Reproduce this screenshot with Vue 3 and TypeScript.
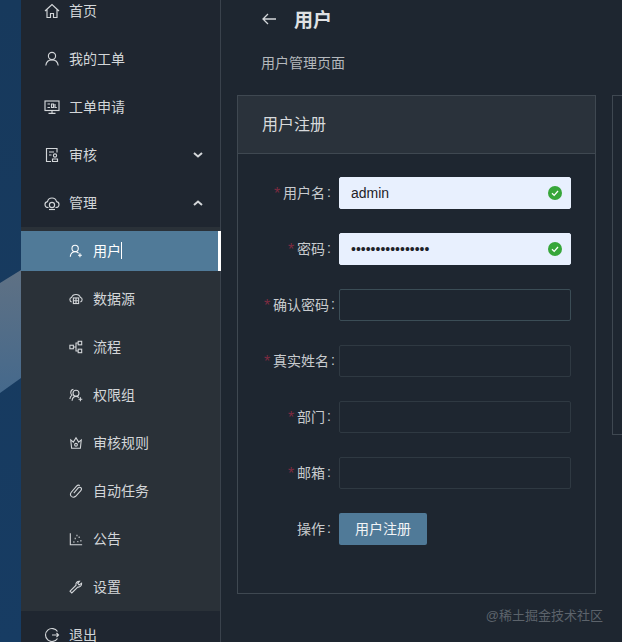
<template>
  <div class="page">
    <div class="backdrop">
      <svg width="21" height="642" viewBox="0 0 21 642">
        <defs>
          <linearGradient id="shard" x1="0" y1="0" x2="0" y2="1">
            <stop offset="0" stop-color="#5f7184" />
            <stop offset="1" stop-color="#45698c" />
          </linearGradient>
        </defs>
        <polygon points="0,283 21,270 21,378 0,393" fill="url(#shard)" />
      </svg>
    </div>

    <aside class="sidebar">
      <ul class="menu">
        <li v-for="item in topItems" :key="item.label" class="menu-item">
          <svg class="icon" viewBox="0 0 16 16" v-html="item.icon"></svg>
          <span class="menu-label">{{ item.label }}</span>
          <svg v-if="item.arrow" class="arrow" viewBox="0 0 10 6">
            <path :d="item.arrow === 'up' ? 'M1 5 5 1.5 9 5' : 'M1 1 5 4.5 9 1'" />
          </svg>
        </li>
      </ul>
      <ul class="submenu">
        <li
          v-for="item in subItems"
          :key="item.label"
          class="menu-item sub-item"
          :class="{ active: item.active }"
        >
          <svg class="icon" viewBox="0 0 16 16" v-html="item.icon"></svg>
          <span class="menu-label">{{ item.label }}</span>
          <span v-if="item.active" class="caret"></span>
        </li>
      </ul>
      <div class="menu-item logout">
        <svg class="icon" viewBox="0 0 16 16">
          <path d="M13.5 4.5A6.5 6.5 0 1 0 13.5 11.5M8 8h7M12.5 6l2 2-2 2" />
        </svg>
        <span class="menu-label">退出</span>
      </div>
    </aside>

    <main class="content">
      <header class="page-header">
        <svg class="back" viewBox="0 0 14 12"><path d="M14 6H1M6 1 1 6l5 5" /></svg>
        <h1 class="page-title">用户</h1>
      </header>
      <p class="page-desc">用户管理页面</p>

      <div class="cards">
        <section class="card">
          <h2 class="card-head">用户注册</h2>
          <form class="form" @submit.prevent>
            <div v-for="field in fields" :key="field.label" class="form-row">
              <label class="form-label" :class="{ long: field.label.length > 3 }"><i class="req">*</i>{{ field.label }}<span class="colon">:</span></label>
              <div class="control" :class="{ filled: field.value, strong: field.strong }">
                <input class="input" :type="field.type" :value="field.value" readonly />
                <svg v-if="field.value" class="ok" viewBox="0 0 14 14">
                  <circle cx="7" cy="7" r="7" />
                  <path d="M4 7.2 6.2 9.4 10 5" />
                </svg>
              </div>
            </div>
            <div class="form-row">
              <label class="form-label">操作<span class="colon">:</span></label>
              <button class="submit" type="button">用户注册</button>
            </div>
          </form>
        </section>
        <section class="card side-card"></section>
      </div>
      <div class="watermark">@稀土掘金技术社区</div>
    </main>
  </div>
</template>

<script setup lang="ts">
interface MenuItem {
  label: string
  icon: string
  arrow?: 'up' | 'down'
  active?: boolean
}

interface Field {
  label: string
  type: string
  value: string
  strong?: boolean
}

const topItems: MenuItem[] = [
  { label: '首页', icon: '<path d="M1 8 8 1.5 15 8M3 6.5V14.5H6.5V10.5H9.5V14.5H13V6.5"/>' },
  { label: '我的工单', icon: '<circle cx="8" cy="5" r="3.6"/><path d="M1.8 14.5C2.2 11 4.6 8.8 8 8.8S13.8 11 14.2 14.5"/>' },
  {
    label: '工单申请',
    icon: '<rect x="1" y="2" width="14" height="9.5"/><path d="M8 11.5V14M4.5 14.3H11.5M3.5 5H6M3.5 8.5H6M7.5 5H9.5V8.5H7.5ZM11 5V8.5H12.8"/>',
  },
  {
    label: '审核',
    icon: '<path d="M13 5.5V1.5H2.5V14.5H7M5 5H10M5 8H7.5"/><circle cx="11" cy="8.5" r="1.6"/><path d="M8.5 14.5V12H13.5V14.5Z"/>',
    arrow: 'down',
  },
  {
    label: '管理',
    icon: '<path d="M4.5 12.5C2.4 12.5 1 11 1 9.4 1 7.8 2.2 6.8 3.5 6.6 4 4.4 5.8 3 8 3S12 4.4 12.5 6.6C13.8 6.8 15 7.8 15 9.4 15 11 13.6 12.5 11.5 12.5"/><circle cx="8" cy="10" r="2.6"/><path d="M5 14.5H11"/>',
    arrow: 'up',
  },
]

const subItems: MenuItem[] = [
  { label: '用户', icon: '<circle cx="7" cy="5" r="3.6"/><path d="M1.5 14.5C1.8 11 4 8.8 7 8.8S10 9.5 11 10.5M12.5 10.5V15M10.3 12.8H14.7"/>', active: true },
  {
    label: '数据源',
    icon: '<path d="M3 11.5C1.6 11 1 10 1 8.6 1 7.4 1.9 6.4 3 6.2 3.6 4 5.6 2.8 8 2.8S12.4 4 13 6.2C14.1 6.4 15 7.4 15 8.6 15 10 14.4 11 13 11.5"/><rect x="5" y="6.8" width="6" height="6.4"/><path d="M5 10H11M8 6.8V13.2"/>',
  },
  {
    label: '流程',
    icon: '<rect x="1" y="6" width="4" height="4"/><rect x="10.5" y="1.5" width="4" height="4"/><rect x="10.5" y="10.5" width="4" height="4"/><path d="M5 8H8V3.5H10.5M8 8V12.5H10.5"/>',
  },
  {
    label: '权限组',
    icon: '<circle cx="8" cy="6" r="3.4"/><path d="M5 1.5C3 2 2 3.5 2 5.4 2 6.6 2.6 7.6 3.4 8.2 2 9.2 1.2 10.6 1 12.5M3.5 14.5C3.8 11.6 5.6 9.6 8 9.6 9.4 9.6 10.4 10 11.3 11M13 10.5V15M10.8 12.8H15.2"/>',
  },
  {
    label: '审核规则',
    icon: '<path d="M2 4.5 5 7 8 2 11 7 14 4.5 13 14H3Z"/><circle cx="8" cy="10" r="1.6"/>',
  },
  {
    label: '自动任务',
    icon: '<path d="M5.5 10.5 10.5 4.5C11.6 3.2 13.2 3.6 13.8 4.4 14.5 5.4 14.4 6.6 13.5 7.6L7.6 14C6 15.6 3.6 15.3 2.5 14 1.3 12.5 1.5 10.8 2.6 9.4L8.6 2.5C9.6 1.4 11 1 12.4 1.6"/>',
  },
  {
    label: '公告',
    icon: '<path d="M1.5 1.5V14.5H15"/><path d="M5 11.5h1.2M9.5 11h1.2M13 10h1.2M6.5 7.5h1.2M11 6h1.2M8.5 4h1.2" stroke-width="1.6"/>',
  },
  {
    label: '设置',
    icon: '<path d="M1.2 12.8 8 6C7.4 3.6 9.2 1.2 12 1.4L10 3.8 11.6 5.6 14.4 3.6C14.8 6.4 12.4 8.6 10 8L3.2 14.8Z"/>',
  },
]

const fields: Field[] = [
  { label: '用户名', type: 'text', value: 'admin' },
  { label: '密码', type: 'password', value: 'admin12345678901' },
  { label: '确认密码', type: 'password', value: '', strong: true },
  { label: '真实姓名', type: 'text', value: '' },
  { label: '部门', type: 'text', value: '' },
  { label: '邮箱', type: 'text', value: '' },
]
</script>

<style>
html,
body {
  margin: 0;
  background: #1e2630;
  overflow: hidden;
}
</style>

<style scoped>
* {
  box-sizing: border-box;
}

.page {
  display: flex;
  width: 622px;
  height: 642px;
  overflow: hidden;
  background: #1e2630;
  color: #d3d6d9;
  font-family: "Liberation Sans", "Noto Sans CJK SC", sans-serif;
  font-size: 14px;
}

.backdrop {
  flex: 0 0 21px;
  height: 642px;
  background: linear-gradient(180deg, #17395c 0%, #173c63 100%);
}

.backdrop svg {
  display: block;
}

.sidebar {
  flex: 0 0 200px;
  height: 642px;
  background: linear-gradient(#3a424c, #3a424c) right / 1px 100% no-repeat, #1f2630;
  overflow: hidden;
}

.menu,
.submenu {
  display: flex;
  flex-direction: column;
  gap: 8px;
  list-style: none;
  margin: 0;
  padding: 0;
}

.menu {
  margin-top: -9px;
  padding-bottom: 4px;
}

.submenu {
  margin-right: 1px;
  background: #2a3138;
  padding: 4px 0;
}

.menu-item {
  position: relative;
  display: flex;
  align-items: center;
  height: 40px;
  padding-left: 24px;
  color: #d3d6d9;
}

.sub-item {
  padding-left: 48px;
}

.sub-item.active {
  margin-right: -1px;
  background: #507a98;
  color: #ffffff;
  border-right: 3px solid #ffffff;
}

.logout {
  margin-top: 4px;
}

.icon {
  flex: none;
  width: 16px;
  height: 16px;
  margin: 0 9px 0 -1px;
  fill: none;
  stroke: currentColor;
  stroke-width: 1.15;
}

.sub-item .icon {
  width: 14px;
  height: 14px;
  margin: 0 10px 0 0;
  stroke-width: 1.25;
}

.menu-label {
  margin-top: -2px;
  white-space: nowrap;
}

.caret {
  width: 1px;
  height: 17px;
  margin-top: -1px;
  background: #ffffff;
}

.arrow {
  position: absolute;
  right: 18px;
  top: 17px;
  width: 10px;
  height: 6px;
  fill: none;
  stroke: #d3d6d9;
  stroke-width: 2;
}

.content {
  flex: 1;
  min-width: 0;
  padding-left: 16px;
}

.page-header {
  display: flex;
  align-items: center;
  height: 38px;
  padding-left: 25px;
}

.back {
  width: 14px;
  height: 12px;
  margin-right: 18px;
  fill: none;
  stroke: #d3d6d9;
  stroke-width: 1.3;
}

.page-title {
  margin: -2px 0 0;
  font-size: 19px;
  font-weight: 700;
  color: #dfe1e3;
}

.page-desc {
  margin: 14px 0 0 24px;
  line-height: 22px;
  color: #b4b8bc;
}

.cards {
  display: flex;
  align-items: flex-start;
  gap: 16px;
  margin-top: 21px;
  width: 500px;
}

.card {
  flex: 0 0 359px;
  height: 499px;
  border: 1px solid #3f4851;
}

.side-card {
  flex: 0 0 120px;
  height: 340px;
}

.card-head {
  margin: 0;
  height: 58px;
  padding-left: 24px;
  background: #2a323b;
  border-bottom: 1px solid #3f4851;
  font-size: 16px;
  font-weight: 400;
  line-height: 57px;
  color: #d8dadc;
}

.form {
  padding-top: 23px;
}

.form-row {
  display: flex;
  align-items: center;
  height: 32px;
  margin-bottom: 24px;
}

.form-label {
  flex: 0 0 101px;
  display: flex;
  justify-content: flex-end;
  align-items: center;
  padding-right: 8px;
  padding-bottom: 2px;
  white-space: nowrap;
  color: #c8cbce;
}

.form-label.long {
  padding-right: 4px;
}

.req {
  font-style: normal;
  font-size: 16px;
  margin-top: 3px;
  color: #7c2b40;
  margin-right: 3px;
}

.colon {
  margin-left: 2px;
}

.control {
  position: relative;
  width: 232px;
  height: 32px;
}

.input {
  display: block;
  width: 100%;
  height: 100%;
  padding: 0 11px;
  border: 1px solid #2f3942;
  border-radius: 2px;
  outline: none;
  background: transparent;
  color: #1d2228;
  font-family: "Liberation Sans", sans-serif;
  font-size: 14px;
}

.control.strong .input {
  border-color: #3b4d56;
}

.control.filled .input {
  border-color: #e8f0fe;
  background: #e8f0fe;
}

.ok {
  position: absolute;
  right: 9px;
  top: 9px;
  width: 14px;
  height: 14px;
}

.ok circle {
  fill: #37a63a;
}

.ok path {
  fill: none;
  stroke: #ffffff;
  stroke-width: 1.3;
}

.submit {
  width: 88px;
  height: 32px;
  padding: 0 0 2px;
  border: 0;
  border-radius: 2px;
  background: #507a98;
  color: #f2f4f6;
  font-family: inherit;
  font-size: 14px;
}

.watermark {
  margin-top: 12px;
  width: 366px;
  text-align: right;
  font-size: 13px;
  line-height: 20px;
  color: #5c636b;
}
</style>
